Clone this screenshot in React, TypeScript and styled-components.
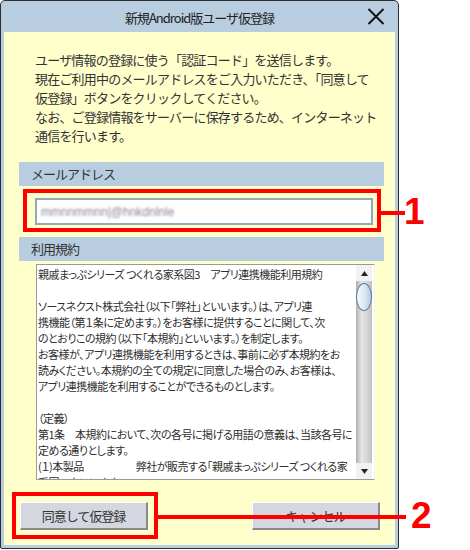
import styled, { createGlobalStyle } from 'styled-components';

const GlobalStyle = createGlobalStyle`
  html, body {
    margin: 0;
    padding: 0;
    background: #ffffff;
  }
  body {
    font-family: "Noto Sans CJK JP", "Noto Sans", sans-serif;
    color: #333333;
  }
`;

const Page = styled.div`
  position: relative;
  width: 470px;
  height: 550px;
`;

const Window = styled.div`
  box-sizing: border-box;
  width: 399px;
  height: 549px;
  border: 1px solid #2e2e2e;
  border-radius: 5px 5px 2px 2px;
  background: #b9cde1;
  padding: 0 3px 3px;
  display: flex;
  flex-direction: column;
`;

const TitleBar = styled.div`
  height: 31px;
  display: grid;
  grid-template-columns: 1fr auto 1fr;
  align-items: center;
`;

const Title = styled.div`
  grid-column: 2;
  font-size: 13px;
  letter-spacing: -1px;
  color: #222222;
  padding-top: 2px;
`;

const CloseButton = styled.div`
  grid-column: 3;
  justify-self: end;
  margin-right: 10px;
  width: 18px;
  height: 18px;
  display: flex;
  align-items: center;
  justify-content: center;
`;

const Body = styled.div`
  flex: 1;
  background: #ffffcc;
  display: flex;
  flex-direction: column;
`;

const Intro = styled.div`
  padding: 18px 0 0 31px;
  font-size: 13px;
  letter-spacing: -0.8px;
  line-height: 19px;
  white-space: nowrap;
  color: #333333;
`;

const SectionHeader = styled.div<{ $top: number }>`
  margin: ${(p) => p.$top}px 11px 0 15px;
  height: 24px;
  line-height: 24px;
  padding-left: 12px;
  background: #b9cde1;
  font-size: 13px;
  letter-spacing: -1px;
  color: #333333;
`;

const EmailInput = styled.div`
  box-sizing: border-box;
  margin: 12px 22px 0 31px;
  height: 27px;
  border: 2px solid #93a8bc;
  background: #ffffff;
  display: flex;
  align-items: center;
  padding-left: 4px;
`;

const BlurredText = styled.span`
  font-family: "Liberation Sans", sans-serif;
  font-size: 12px;
  color: #8d8196;
  filter: blur(1.3px);
`;

const TermsBox = styled.div`
  box-sizing: border-box;
  margin: 3px 20px 0 32px;
  height: 216px;
  border: 1px solid #9a9a9a;
  border-right-color: #f4f4f4;
  background: #ffffff;
  display: flex;
  padding-right: 2px;
`;

const TermsText = styled.div`
  flex: 1;
  overflow: hidden;
  padding: 1px 0 0 1px;
  font-size: 11px;
  letter-spacing: -0.5px;
  line-height: 16px;
  white-space: nowrap;
  color: #2e2e2e;
  font-feature-settings: "palt";
`;

const Line = styled.div`
  height: 16px;
`;

const Gap = styled.span<{ $w: number }>`
  display: inline-block;
  width: ${(p) => p.$w}px;
`;

const ScrollBar = styled.div`
  width: 16px;
  display: flex;
  flex-direction: column;
  background: linear-gradient(to right, #b0b0b0, #e6e6e6 35%, #d6d6d6 70%, #c0c0c0);
`;

const ArrowButton = styled.div`
  height: 16px;
  flex: none;
  display: flex;
  align-items: center;
  justify-content: center;
  background: #f2f2f2;
`;

const Thumb = styled.div`
  box-sizing: border-box;
  margin-top: 2px;
  height: 28px;
  flex: none;
  border: 1px solid #5c7893;
  border-radius: 8px / 14px;
  background: linear-gradient(to right, #f6f9fc, #dde8f3 50%, #b9cde1);
`;

const Track = styled.div`
  flex: 1;
`;

const ButtonRow = styled.div`
  margin-top: 22px;
  padding: 0 15px 0 16px;
  display: flex;
  justify-content: space-between;
`;

const Button = styled.div`
  box-sizing: border-box;
  width: 128px;
  height: 28px;
  background: #d5d7e0;
  border-top: 1px solid #ffffff;
  border-left: 1px solid #ffffff;
  border-right: 2px solid #8a8a8a;
  border-bottom: 2px solid #8a8a8a;
  display: flex;
  align-items: center;
  justify-content: center;
  font-size: 13px;
  letter-spacing: -1px;
  color: #333333;
`;

const RedFrame = styled.div<{ $x: number; $y: number; $w: number; $h: number }>`
  position: absolute;
  box-sizing: border-box;
  left: ${(p) => p.$x}px;
  top: ${(p) => p.$y}px;
  width: ${(p) => p.$w}px;
  height: ${(p) => p.$h}px;
  border: 4px solid #ff0000;
`;

const RedLine = styled.div<{ $x: number; $y: number; $w: number }>`
  position: absolute;
  left: ${(p) => p.$x}px;
  top: ${(p) => p.$y}px;
  width: ${(p) => p.$w}px;
  height: 4px;
  background: #ff0000;
`;

const Callout = styled.div<{ $x: number; $y: number }>`
  position: absolute;
  left: ${(p) => p.$x}px;
  top: ${(p) => p.$y}px;
  font-family: "Liberation Sans", Arial, sans-serif;
  font-weight: 700;
  font-size: 37px;
  line-height: 1;
  color: #ff0000;
`;

const terms: string[] = [
  '親戚まっぷシリーズ つくれる家系図3　アプリ連携機能利用規約',
  '',
  'ソースネクスト株式会社（以下「弊社」といいます。）は、アプリ連',
  '携機能（第１条に定めます。）をお客様に提供することに関して、次',
  'のとおりこの規約（以下「本規約」といいます。）を制定します。',
  'お客様が、アプリ連携機能を利用するときは、事前に必ず本規約をお',
  '読みください。本規約の全ての規定に同意した場合のみ、お客様は、',
  'アプリ連携機能を利用することができるものとします。',
  '',
  '（定義）',
  '第1条　本規約において、次の各号に掲げる用語の意義は、当該各号に',
  '定める通りとします。',
];

function Arrow({ up }: { up?: boolean }) {
  return (
    <svg width="7" height="5" viewBox="0 0 7 5">
      <polygon points={up ? '0,5 7,5 3.5,0' : '0,0 7,0 3.5,5'} fill="#222" />
    </svg>
  );
}

export default function App() {
  return (
    <>
      <GlobalStyle />
      <Page>
        <Window>
          <TitleBar>
            <Title>新規Android版ユーザ仮登録</Title>
            <CloseButton>
              <svg width="18" height="17" viewBox="0 0 18 17">
                <path d="M1.5 1 L16.5 16 M16.5 1 L1.5 16" stroke="#111" strokeWidth="2" />
              </svg>
            </CloseButton>
          </TitleBar>
          <Body>
            <Intro>
              ユーザ情報の登録に使う「認証コード」を送信します。
              <br />
              現在ご利用中のメールアドレスをご入力いただき、「同意して
              <br />
              仮登録」ボタンをクリックしてください。
              <br />
              なお、ご登録情報をサーバーに保存するため、インターネット
              <br />
              通信を行います。
            </Intro>

            <SectionHeader $top={17}>メールアドレス</SectionHeader>
            <EmailInput>
              <BlurredText>mmnnmmnn|@hnkdnlnle</BlurredText>
            </EmailInput>

            <SectionHeader $top={12}>利用規約</SectionHeader>
            <TermsBox>
              <TermsText>
                {terms.map((t, i) => (
                  <Line key={i}>{t}</Line>
                ))}
                <Line>
                  (１)本製品
                  <Gap $w={52} />
                  弊社が販売する「親戚まっぷシリーズ つくれる家
                </Line>
                <Line>系図3」をいいます。</Line>
              </TermsText>
              <ScrollBar>
                <ArrowButton>
                  <Arrow up />
                </ArrowButton>
                <Thumb />
                <Track />
                <ArrowButton>
                  <Arrow />
                </ArrowButton>
              </ScrollBar>
            </TermsBox>

            <ButtonRow>
              <Button>同意して仮登録</Button>
              <Button>キャンセル</Button>
            </ButtonRow>
          </Body>
        </Window>

        <RedFrame $x={23} $y={189} $w={358} $h={43} />
        <RedLine $x={381} $y={211} $w={24} />
        <Callout $x={404} $y={193}>1</Callout>

        <RedFrame $x={12} $y={492} $w={146} $h={47} />
        <RedLine $x={158} $y={515} $w={248} />
        <Callout $x={411} $y={497}>2</Callout>
      </Page>
    </>
  );
}
